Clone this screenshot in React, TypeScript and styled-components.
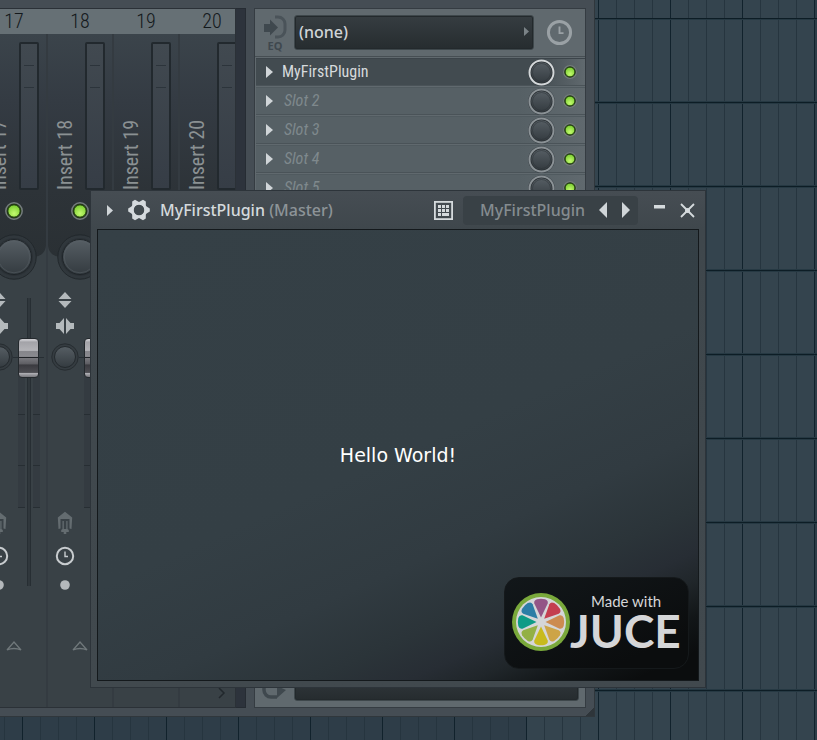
import React from "react";
import styled, { createGlobalStyle, css } from "styled-components";

const sans = `"Noto Sans", "Open Sans", sans-serif`;
const narrow = `"Roboto Condensed", Roboto, sans-serif`;

const GlobalStyle = createGlobalStyle`
  *, *::before, *::after { box-sizing: border-box; }
  html, body { margin: 0; padding: 0; background: #34444e; }
  svg { display: block; flex: none; }
  button { appearance: none; border: 0; margin: 0; padding: 0; background: none; color: inherit; font: inherit; cursor: pointer; }
`;

/* Desktop with the playlist grid */

const Desktop = styled.main`
  position: relative;
  width: 100%;
  height: 100vh;
  overflow: hidden;
  font-family: ${sans};
  background:
    repeating-linear-gradient(to bottom, #0d1d25 0 1px, #263943 1px 2px, transparent 2px 83px, #263943 83px 84px) 0 18px,
    repeating-linear-gradient(to right, #11222c 0 1px, transparent 1px 72px) 22px 0,
    repeating-linear-gradient(to right, #26353f 0 1px, transparent 1px 18px) 4px 0,
    repeating-linear-gradient(to right, #2e3d48 0 288px, #34444e 288px 576px) 238px 0;
`;

/* Mixer window */

const Mixer = styled.section`
  display: flex;
  width: calc(100% - 222px);
  height: calc(100vh - 23px);
  padding: 8px 8px 8px 0;
  background: #454d54;
  border-right: 1px solid #30373c;
  border-bottom: 1px solid #30373c;
  position: relative;
`;

const ResizeCorner = styled.i`
  position: absolute;
  right: 0;
  bottom: 0;
  width: 8px;
  height: 8px;
  background: linear-gradient(135deg, transparent 50%, #2e353a 50%);
`;

const Tracks = styled.div`
  position: relative;
  flex: none;
  display: flex;
  flex-direction: column;
  width: 236px;
  overflow: hidden;
  background: #394146;
  border: solid #2b3137;
  border-width: 1px 1px 1px 0;
`;

const TrackNumbers = styled.header`
  flex: none;
  display: flex;
  height: 25px;
  margin-left: -18px;
  background: #667075;
`;

const TrackNumber = styled.div`
  flex: none;
  width: 66px;
  padding-right: 2px;
  text-align: center;
  font: 300 20px/25px ${narrow};
  color: #14191c;
`;

const Strips = styled.div`
  flex: 1;
  display: flex;
  margin-left: -18px;
`;

const Strip = styled.div`
  flex: none;
  width: 66px;
  display: flex;
  flex-direction: column;
  align-items: center;
  border-right: 2px solid #343b41;
`;

const StripTop = styled.div`
  width: 100%;
  height: 223px;
  padding-top: 8px;
  display: flex;
  flex-direction: column;
  align-items: center;
  gap: 12px;
  border-radius: 0 0 12px 12px;
  background: linear-gradient(#3b444b, #343b43 30%, #2d3338 70%, #2a3034);
`;

const NameAndMeter = styled.div`
  display: flex;
  width: 100%;
  height: 148px;
`;

const StripName = styled.div`
  width: 37px;
  padding-left: 3px;
  writing-mode: vertical-rl;
  transform: rotate(180deg);
  font: 400 20px/34px ${narrow};
  color: #8b9193;
`;

const Meter = styled.div`
  width: 20px;
  border: 2px solid #22292e;
  border-radius: 2px;
  background:
    linear-gradient(#2c343b, #2c343b) 3px 21px / 10px 1px no-repeat,
    linear-gradient(#2c343b, #2c343b) 3px 43px / 10px 1px no-repeat,
    linear-gradient(#414950, #363d46);
`;

const PanButton = styled.button`
  margin-top: -23px;
`;

const StripBody = styled.div`
  display: flex;
  width: 100%;
  padding-left: 3px;
`;

const IconColumn = styled.div`
  width: 28px;
  padding-top: 10px;
  display: flex;
  flex-direction: column;
  align-items: center;
`;

const Gap = styled.div<{ $h: number }>`
  flex: none;
  height: ${(p) => p.$h}px;
`;

const thumb = css`
  appearance: none;
  width: 21px;
  height: 40px;
  border: 1px solid #24292d;
  border-radius: 4px;
  background: linear-gradient(
    #c9c9cd 0 3%, #a3a3a8 8%, #b3b3b7 30%, #85858a 33%, #8b8b90 46%,
    #202327 47% 50%, #77777c 51%, #5d5d62 66%, #3a3a3f 68%, #4c4c51 88%, #b0b0b5 90%, #77777c 100%
  );
`;

const Fader = styled.input`
  appearance: none;
  writing-mode: vertical-lr;
  direction: rtl;
  width: 31px;
  height: 288px;
  margin: 18px 0 0;
  background:
    linear-gradient(to right, #272e33 0 1px, #30373c 1px 3px, #272e33 3px 4px) 14px 0 / 4px 100% no-repeat,
    linear-gradient(#394146, #394146) 12px 0 / 8px 100% no-repeat,
    linear-gradient(#272e33, #272e33) 0 59px / 31px 1px no-repeat,
    linear-gradient(#272e33, #272e33) 5px 116px / 22px 1px no-repeat,
    linear-gradient(#272e33, #272e33) 5px 167px / 22px 1px no-repeat,
    linear-gradient(#272e33, #272e33) 5px 209px / 22px 1px no-repeat,
    linear-gradient(#343b41, #343b41) 5px 72px / 22px 137px no-repeat;
  &::-webkit-slider-runnable-track { width: 21px; }
  &::-webkit-slider-thumb { ${thumb} }
  &::-moz-range-thumb { ${thumb} }
`;

const ScrollRight = styled.button`
  position: absolute;
  right: 8px;
  bottom: 7px;
`;

const Scrollbar = styled.div`
  flex: none;
  width: 10px;
  margin-right: 8px;
  background: #2d333c;
  border: solid #262c33;
  border-width: 1px 1px 1px 0;
`;

/* Effect rack */

const Rack = styled.div`
  flex: 1;
  min-width: 0;
  display: flex;
  flex-direction: column;
  background: #60696e;
  border: 1px solid #353c42;
  overflow: hidden;
`;

const RackHeader = styled.div`
  flex: none;
  height: 48px;
  display: flex;
  align-items: center;
  padding: 0 12px 0 8px;
  border-bottom: 1px solid #464e53;
`;

const EqIn = styled.div`
  width: 24px;
  margin-right: 7px;
  text-align: center;
  font: 700 11px/11px ${sans};
  color: #3f484e;
`;

const Field = styled.button`
  flex: 1;
  min-width: 0;
  height: 35px;
  display: flex;
  align-items: center;
  justify-content: space-between;
  padding: 0 4px 2px 4px;
  border: 1px solid #3e474b;
  border-radius: 3px;
  box-shadow: inset 0 0 0 1px #23292c;
  background: linear-gradient(#363d41, #262c2f);
  font: 500 16px/24px ${sans};
  color: #d0d4d7;
`;

const HeaderClock = styled.button`
  margin-left: 12px;
`;

const Slots = styled.div`
  flex: 1;
  padding: 1px 0 0 1px;
  display: flex;
  flex-direction: column;
  gap: 1px;
`;

const Slot = styled.div<{ $on?: boolean }>`
  height: 28px;
  display: flex;
  align-items: center;
  padding: 0 8px 0 10px;
  border-bottom: 1px solid #4a5358;
  border-top: 1px solid ${(p) => (p.$on ? "#3c444a" : "#505a5f")};
  background: ${(p) =>
    p.$on
      ? "linear-gradient(to right, #424b50 85%, #60696e 100%)"
      : "linear-gradient(to right, #566065 80%, #60696e 100%)"};
`;

const SlotName = styled.span<{ $on?: boolean }>`
  flex: 1;
  padding-left: ${(p) => (p.$on ? 9 : 11)}px;
  font: ${(p) => (p.$on ? "normal" : "italic")} 400 16px/24px ${narrow};
  color: ${(p) => (p.$on ? "#d6dadc" : "#7f898d")};
`;

const SlotLed = styled.button`
  margin-left: 8px;
`;

const RackFooter = styled.div`
  flex: none;
  display: flex;
  align-items: flex-end;
  padding: 0 6px 6px 6px;
`;

const ReturnIcon = styled.div`
  width: 33px;
  padding-bottom: 1px;
`;

/* Plugin window */

const PluginWindow = styled.section`
  position: absolute;
  left: 90px;
  right: 111px;
  top: 190px;
  bottom: 52px;
  display: flex;
  flex-direction: column;
  padding: 0 6px 6px;
  border: 1px solid #2d343a;
  background: linear-gradient(#464d53 0, #3f474c 38px, #41494e 100%);
`;

const TitleBar = styled.header`
  flex: none;
  height: 38px;
  display: flex;
  align-items: center;
  padding: 0 4px 0 10px;
  font: 500 16px/24px ${sans};
  color: #d5dadd;
  white-space: nowrap;
`;

const GearButton = styled.button`
  margin: 0 10px 0 15px;
`;

const Title = styled.h1`
  flex: 1;
  margin: 0;
  font: inherit;
  overflow: hidden;
  span { color: #8d9498; }
`;

const Preset = styled.div`
  display: flex;
  align-items: center;
  height: 29px;
  margin-left: 10px;
  padding: 0 8px 0 17px;
  border-radius: 4px;
  background: #394146;
  color: #858c90;
`;

const PresetArrow = styled.button<{ $gap: number }>`
  margin-left: ${(p) => p.$gap}px;
`;

const WindowButton = styled.button<{ $gap: number }>`
  margin-left: ${(p) => p.$gap}px;
`;

const Editor = styled.div`
  position: relative;
  flex: 1;
  display: grid;
  place-items: center;
  border: 1px solid #14191c;
  background: linear-gradient(
    156deg, #354046 0, #343f45 50%, #313b41 66%, #2b3439 76%, #272d34 82%, #20262a 86%, #121618 91%, #0b0d0e 96%
  );
  font: 400 19px/24px "DejaVu Sans", Verdana, sans-serif;
  color: #fff;
`;

const Splash = styled.div`
  position: absolute;
  right: 9px;
  bottom: 11px;
  display: flex;
  align-items: center;
  width: 185px;
  height: 92px;
  padding: 0 0 2px 7px;
  border-radius: 15px;
  border: 1px solid #15191b;
  background: linear-gradient(156deg, #12171a, #0b0d0e 80%);
  color: #d5d6d8;
`;

const Wordmark = styled.div`
  flex: 1;
  display: flex;
  flex-direction: column;
`;

const MadeWith = styled.span`
  padding-left: 21px;
  font: 400 15px/18px Lato, sans-serif;
`;

const Juce = styled.span`
  font: 700 46px/42px Lato, sans-serif;
`;

/* Drawings */

const HiddenSvg = styled.svg`
  position: absolute;
`;

const Defs = () => (
  <HiddenSvg width="0" height="0" aria-hidden>
    <defs>
      <linearGradient id="knob" x1="0" y1="0" x2="0" y2="1">
        <stop offset="0" stopColor="#565e64" />
        <stop offset="1" stopColor="#343b40" />
      </linearGradient>
      <radialGradient id="led" cx=".5" cy=".7" r=".7">
        <stop offset="0" stopColor="#c4fb70" />
        <stop offset="1" stopColor="#76cb2c" />
      </radialGradient>
    </defs>
  </HiddenSvg>
);

const Led = ({ size }: { size: number }) => (
  <svg width={size} height={size} viewBox="0 0 18 18">
    <circle cx="9" cy="9" r="8.2" fill="#2a3a20" stroke="#747c7d" strokeWidth="1.5" />
    <circle cx="9" cy="9" r="6.2" fill="url(#led)" stroke="#17330a" strokeWidth="1" />
  </svg>
);

const BigKnob = () => (
  <svg width="46" height="46" viewBox="0 0 46 46">
    <circle cx="23" cy="23" r="22.2" fill="#30373c" stroke="#22282c" />
    <circle cx="23" cy="23" r="19" fill="#2b3136" />
    <circle cx="23" cy="23" r="17.5" fill="url(#knob)" stroke="#1f2529" />
    <circle cx="23" cy="23" r="15.8" fill="none" stroke="#5a6268" strokeOpacity=".5" />
  </svg>
);

const SmallKnob = () => (
  <svg width="28" height="28" viewBox="0 0 28 28">
    <circle cx="14" cy="14" r="13.2" fill="#353c41" stroke="#272d31" />
    <circle cx="14" cy="14" r="10.5" fill="url(#knob)" stroke="#23292d" />
  </svg>
);

const SlotKnob = ({ on }: { on?: boolean }) => (
  <svg width="27" height="27" viewBox="0 0 27 27">
    <circle cx="13.5" cy="13.5" r="13.3" fill="#343b40" />
    <circle cx="13.5" cy="13.5" r="12" fill="#2b3135" stroke={on ? "#d3d7d9" : "#8b9296"} strokeWidth="2" />
    <circle cx="13.5" cy="13.5" r="10.2" fill="url(#knob)" />
    <circle cx="13.5" cy="13.5" r="9" fill="none" stroke="#2b3135" strokeOpacity=".5" />
  </svg>
);

const Triangle = ({ w = 7, h = 12, left, color = "#d0d5d8" }: { w?: number; h?: number; left?: boolean; color?: string }) => (
  <svg width={w} height={h} viewBox="0 0 7 12" preserveAspectRatio="none">
    <path d={left ? "M7 0V12L0 6Z" : "M0 0V12L7 6Z"} fill={color} />
  </svg>
);

const Clock = ({ size, color, width }: { size: number; color: string; width: number }) => (
  <svg width={size} height={size} viewBox="0 0 20 20" fill="none" stroke={color}>
    <circle cx="10" cy="10" r="8.2" strokeWidth={width} />
    <path d="M10 5.5V10.5H13" strokeWidth="1.4" />
  </svg>
);

const UpDown = () => (
  <svg width="14" height="20" viewBox="0 0 14 20" fill="#b4b9bc">
    <path d="M.5 9 7 2l6.500 7ZM.5 11h13L7 18Z" />
  </svg>
);

const Swap = () => (
  <svg width="20" height="20" viewBox="0 0 20 20" fill="#b4b9bc">
    <path d="M9 2v16L4.500 13H1V7h3.500ZM11 2v16L15.500 13H19V7h-3.500Z" />
  </svg>
);

const Plug = () => (
  <svg width="16" height="24" viewBox="0 0 16 24" fill="#646c70">
    <path d="M1.500 18 .8 6.500 8 .8l7.200 5.700L14.500 18l-2-.5V8H3.500v9.500Z" />
    <path d="M5.500 10v8l-1.300 1v2h2.500v2h2.600v-2h2.500v-2l-1.300-1v-8H9.300v8H6.800v-8Z" />
  </svg>
);

const Dot = () => (
  <svg width="12" height="12" viewBox="0 0 12 12"><circle cx="6" cy="6" r="4.800" fill="#b4b8bb" /></svg>
);

const Arrowhead = () => (
  <svg width="16" height="12" viewBox="0 0 16 12" fill="none" stroke="#70787b" strokeWidth="1.300">
    <path d="M1 10 8 2l7 8Q8 7 1 10Z" />
  </svg>
);

const InputIcon = () => (
  <svg width="24" height="25" viewBox="0 0 24 25">
    <path d="M1 9h6V4.500L15 12.500 7 20.500V17H1Z" fill="#3f484e" />
    <path d="M12 2h3a7 7 0 0 1 7 7v6a7 7 0 0 1-7 7h-3" fill="none" stroke="#4a5359" strokeWidth="3" />
  </svg>
);

const LoopIcon = () => (
  <svg width="26" height="22" viewBox="0 0 26 22">
    <path d="M16 19H10a7 7 0 0 1-7-7V9a7 7 0 0 1 7-7h4" fill="none" stroke="#3f484e" strokeWidth="3.500" />
    <path d="M16 8 25 12 16 20Z" fill="#3f484e" />
  </svg>
);

const Gear = () => (
  <svg width="22" height="22" viewBox="-11 -11 22 22">
    {[0, 60, 120, 180, 240, 300].map((a) => (
      <path key={a} d="M6-4.400 10.800-1.600V1.600L6 4.400Z" transform={`rotate(${a})`} fill="#d5dadd" />
    ))}
    <circle r="6.600" fill="none" stroke="#d5dadd" strokeWidth="3" />
    <circle r="5.200" fill="#41494e" />
  </svg>
);

const Pads = () => (
  <svg width="19" height="19" viewBox="0 0 19 19">
    <rect x=".9" y=".9" width="17.200" height="17.200" fill="none" stroke="#d5dadd" strokeWidth="1.800" />
    <path
      d="M4 4h3v3H4zM8 4h3v3H8zM12 4h3v3h-3zM4 8h3v3H4zM8 8h3v3H8zM12 8h3v3h-3zM4 12h3v3H4zM8 12h7v3H8z"
      fill="#d5dadd"
    />
  </svg>
);

const slices = ["#935587", "#c43e50", "#cc8b51", "#cda447", "#c8ba1e", "#93b045", "#0f9b86", "#2c7da6"];

const Citrus = () => (
  <svg width="58" height="58" viewBox="-29 -29 58 58">
    <circle r="29" fill="#7aa93b" />
    <circle r="25" fill="#d5d6d8" />
    {slices.map((color, i) => (
      <path
        key={color}
        d="M0-4.500 -6.700-18.500Q-7.500-21.500-4-22.700Q0-23.700 4-22.700Q7.500-21.500 6.700-18.500Z"
        transform={`rotate(${i * 45})`}
        fill={color}
      />
    ))}
  </svg>
);

const tracks = [17, 18, 19, 20];
const slots = ["MyFirstPlugin", "Slot 2", "Slot 3", "Slot 4", "Slot 5", "Slot 6", "Slot 7", "Slot 8", "Slot 9", "Slot 10"];

const MixerStrip = ({ n }: { n: number }) => (
  <Strip>
    <StripTop>
      <NameAndMeter>
        <StripName>Insert {n}</StripName>
        <Meter />
      </NameAndMeter>
      <button aria-label={`Mute insert ${n}`}><Led size={18} /></button>
    </StripTop>
    <PanButton aria-label={`Pan insert ${n}`}><BigKnob /></PanButton>
    <StripBody>
      <IconColumn>
        <UpDown />
        <Gap $h={6} />
        <Swap />
        <Gap $h={7} />
        <SmallKnob />
        <Gap $h={140} />
        <Plug />
        <Gap $h={11} />
        <Clock size={20} color="#c8cccf" width={2} />
        <Gap $h={13} />
        <Dot />
      </IconColumn>
      <Fader type="range" min={0} max={248} defaultValue={208} aria-label={`Volume insert ${n}`} />
    </StripBody>
    <Gap $h={49} />
    <Arrowhead />
  </Strip>
);

export default function App() {
  return (
    <Desktop>
      <GlobalStyle />
      <Defs />
      <Mixer>
        <Tracks>
          <TrackNumbers>
            {tracks.map((n) => <TrackNumber key={n}>{n}</TrackNumber>)}
          </TrackNumbers>
          <Strips>
            {tracks.map((n) => <MixerStrip key={n} n={n} />)}
          </Strips>
          <ScrollRight aria-label="Scroll right">
            <svg width="10" height="14" viewBox="0 0 10 14" fill="none" stroke="#22282d" strokeWidth="1.500">
              <path d="M2 2l5 5-5 5" />
            </svg>
          </ScrollRight>
        </Tracks>
        <Scrollbar />
        <Rack>
          <RackHeader>
            <EqIn><InputIcon />EQ</EqIn>
            <Field>(none)<Triangle w={5} h={9} color="#7b8387" /></Field>
            <HeaderClock aria-label="Latency"><Clock size={27} color="#9aa1a5" width={2.2} /></HeaderClock>
          </RackHeader>
          <Slots>
            {slots.map((name, i) => (
              <Slot key={name} $on={i === 0}>
                <Triangle />
                <SlotName $on={i === 0}>{name}</SlotName>
                <button aria-label={`${name} mix level`}><SlotKnob on={i === 0} /></button>
                <SlotLed aria-label={`${name} enabled`}><Led size={14} /></SlotLed>
              </Slot>
            ))}
          </Slots>
          <RackFooter>
            <ReturnIcon><LoopIcon /></ReturnIcon>
            <Field aria-label="Output" />
          </RackFooter>
        </Rack>
        <ResizeCorner />
      </Mixer>

      <PluginWindow>
        <TitleBar>
          <button aria-label="Expand"><Triangle w={6} h={11} /></button>
          <GearButton aria-label="Settings"><Gear /></GearButton>
          <Title>MyFirstPlugin <span>(Master)</span></Title>
          <button aria-label="Presets"><Pads /></button>
          <Preset>
            MyFirstPlugin
            <PresetArrow $gap={14} aria-label="Previous preset"><Triangle w={8} h={16} left /></PresetArrow>
            <PresetArrow $gap={15} aria-label="Next preset"><Triangle w={8} h={16} /></PresetArrow>
          </Preset>
          <WindowButton $gap={16} aria-label="Minimise">
            <svg width="11" height="16" viewBox="0 0 11 16"><path d="M0 3h11v3.500H0Z" fill="#d5dadd" /></svg>
          </WindowButton>
          <WindowButton $gap={15} aria-label="Close">
            <svg width="15" height="15" viewBox="0 0 15 15">
              <path d="M1 1 14 14M14 1 1 14" stroke="#d5dadd" strokeWidth="1.800" />
              <circle cx="7.500" cy="7.500" r="2.500" fill="#d5dadd" />
            </svg>
          </WindowButton>
        </TitleBar>
        <Editor>
          Hello World!
          <Splash>
            <Citrus />
            <Wordmark>
              <MadeWith>Made with</MadeWith>
              <Juce>JUCE</Juce>
            </Wordmark>
          </Splash>
        </Editor>
      </PluginWindow>
    </Desktop>
  );
}
